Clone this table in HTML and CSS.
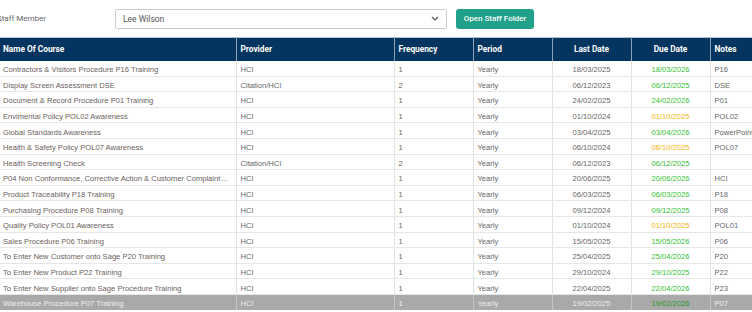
FILE: index.html
```html
<!DOCTYPE html>
<html>
<head>
<meta charset="utf-8">
<link rel="stylesheet" href="styles.css">
</head>
<body>
<div class="page">
  <div class="toolbar">
    <label class="label">Staff Member</label>
    <div class="select"><span>Lee Wilson</span>
      <svg class="chev" width="8" height="5" viewBox="0 0 8 5"><path d="M1 1l3 3 3-3" fill="none" stroke="#555" stroke-width="1.2"/></svg>
    </div>
    <button class="btn">Open Staff Folder</button>
  </div>
  <table class="grid">
    <colgroup>
      <col style="width:236px"><col style="width:158px"><col style="width:79px"><col style="width:79px"><col style="width:79px"><col style="width:79px"><col style="width:80px">
    </colgroup>
    <thead>
      <tr><th>Name Of Course</th><th>Provider</th><th>Frequency</th><th>Period</th><th class="c">Last Date</th><th class="c">Due Date</th><th>Notes</th></tr>
    </thead>
    <tbody>
      <tr><td class="n">Contractors &amp; Visitors Procedure P16 Training</td><td>HCI</td><td>1</td><td>Yearly</td><td class="c">18/03/2025</td><td class="c g">18/03/2026</td><td>P16</td></tr>
      <tr><td class="n">Display Screen Assessment DSE</td><td>Citation/HCI</td><td>2</td><td>Yearly</td><td class="c">06/12/2023</td><td class="c g">06/12/2025</td><td>DSE</td></tr>
      <tr><td class="n">Document &amp; Record Procedure P01 Training</td><td>HCI</td><td>1</td><td>Yearly</td><td class="c">24/02/2025</td><td class="c g">24/02/2026</td><td>P01</td></tr>
      <tr><td class="n">Envimental Policy POL02 Awareness</td><td>HCI</td><td>1</td><td>Yearly</td><td class="c">01/10/2024</td><td class="c o">01/10/2025</td><td>POL02</td></tr>
      <tr><td class="n">Global Standards Awareness</td><td>HCi</td><td>1</td><td>Yearly</td><td class="c">03/04/2025</td><td class="c g">03/04/2026</td><td>PowerPoint</td></tr>
      <tr><td class="n">Health &amp; Safety Policy POL07 Awareness</td><td>HCI</td><td>1</td><td>Yearly</td><td class="c">06/10/2024</td><td class="c o">06/10/2025</td><td>POL07</td></tr>
      <tr><td class="n">Health Screening Check</td><td>Citation/HCI</td><td>2</td><td>Yearly</td><td class="c">06/12/2023</td><td class="c g">06/12/2025</td><td></td></tr>
      <tr><td class="n">P04 Non Conformance, Corrective Action &amp; Customer Complaints…</td><td>HCI</td><td>1</td><td>Yearly</td><td class="c">20/06/2025</td><td class="c g">20/06/2026</td><td>HCI</td></tr>
      <tr><td class="n">Product Traceability P18 Training</td><td>HCI</td><td>1</td><td>Yearly</td><td class="c">06/03/2025</td><td class="c g">06/03/2026</td><td>P18</td></tr>
      <tr><td class="n">Purchasing Procedure P08 Training</td><td>HCI</td><td>1</td><td>Yearly</td><td class="c">09/12/2024</td><td class="c g">09/12/2025</td><td>P08</td></tr>
      <tr><td class="n">Quality Policy POL01 Awareness</td><td>HCI</td><td>1</td><td>Yearly</td><td class="c">01/10/2024</td><td class="c o">01/10/2025</td><td>POL01</td></tr>
      <tr><td class="n">Sales Procedure P06 Training</td><td>HCI</td><td>1</td><td>Yearly</td><td class="c">15/05/2025</td><td class="c g">15/05/2026</td><td>P06</td></tr>
      <tr><td class="n">To Enter New Customer onto Sage P20 Training</td><td>HCI</td><td>1</td><td>Yearly</td><td class="c">25/04/2025</td><td class="c g">25/04/2026</td><td>P20</td></tr>
      <tr><td class="n">To Enter New Product P22 Training</td><td>HCI</td><td>1</td><td>Yearly</td><td class="c">29/10/2024</td><td class="c g">29/10/2025</td><td>P22</td></tr>
      <tr><td class="n">To Enter New Supplier onto Sage Procedure Training</td><td>HCI</td><td>1</td><td>Yearly</td><td class="c">22/04/2025</td><td class="c g">22/04/2026</td><td>P23</td></tr>
      <tr class="sel"><td class="n">Warehouse Procedure P07 Training</td><td>HCI</td><td>1</td><td>Yearly</td><td class="c">19/02/2025</td><td class="c g">19/02/2026</td><td>P07</td></tr>
    </tbody>
  </table>
</div>
</body>
</html>
```

FILE: styles.css
```css
html, body { margin: 0; padding: 0; background: #fff; overflow: hidden; }
body { width: 752px; height: 312px; }
.page { width: 752px; overflow: hidden; }
.toolbar {
  display: flex; align-items: center; height: 37px;
  font-family: Roboto, "Liberation Sans", sans-serif; font-size: 8px; color: #666;
}
.label { width: 118px; margin-left: -3px; color: #666; margin-top: -1px; }
.select {
  display: flex; align-items: center; justify-content: space-between;
  padding: 0 6px 0 7px; box-sizing: border-box; width: 332px; height: 20px;
  border: 1px solid #ccc; border-radius: 2px;
  font-size: 8.5px; color: #555; margin-top: 0;
}
.chev { margin-right: 1px; }
.btn {
  margin-left: 9px; height: 20px; width: 78px; border: none; border-radius: 3px;
  background: #21a08a; color: #fff; font-family: Roboto, "Liberation Sans", sans-serif;
  font-size: 8px; font-weight: 500; padding: 0;
}
.grid {
  border-collapse: collapse; table-layout: fixed; width: 790px;
  font-family: "Liberation Sans", Arial, sans-serif; font-size: 7.6px; color: #666;
  border-top: 1px solid #b8c4d0;
}
.grid th {
  background: #043460; color: #fff; font-family: Roboto, "Liberation Sans", sans-serif;
  font-weight: 700; font-size: 8.3px; text-align: left; height: 23px; padding: 0 4px;
  border-left: 1px solid #8ea2b6; box-sizing: border-box;
}
.grid th:first-child { border-left: none; padding-left: 3px; }
.grid th.c { text-align: center; }
.grid td {
  height: 15.6px; padding: 3px 4px 0; white-space: nowrap; overflow: hidden; text-overflow: ellipsis;
  border-bottom: 1px solid #e6e6e6; border-left: 1px solid #e2e2e2; box-sizing: border-box;
}
.grid td:first-child { border-left: none; padding-left: 3px; }
.grid td.n { color: #6b615c; }
.grid td.c { text-align: center; }
.grid td.g { color: #2fbf2f; }
.grid td.o { color: #f7b30a; }
.grid tr.sel td { background: #a9a9a9; color: #eee; border-left-color: #c4c4c4; border-bottom: none; }
.grid tr.sel td.g { color: #1a9a1a; }
```
